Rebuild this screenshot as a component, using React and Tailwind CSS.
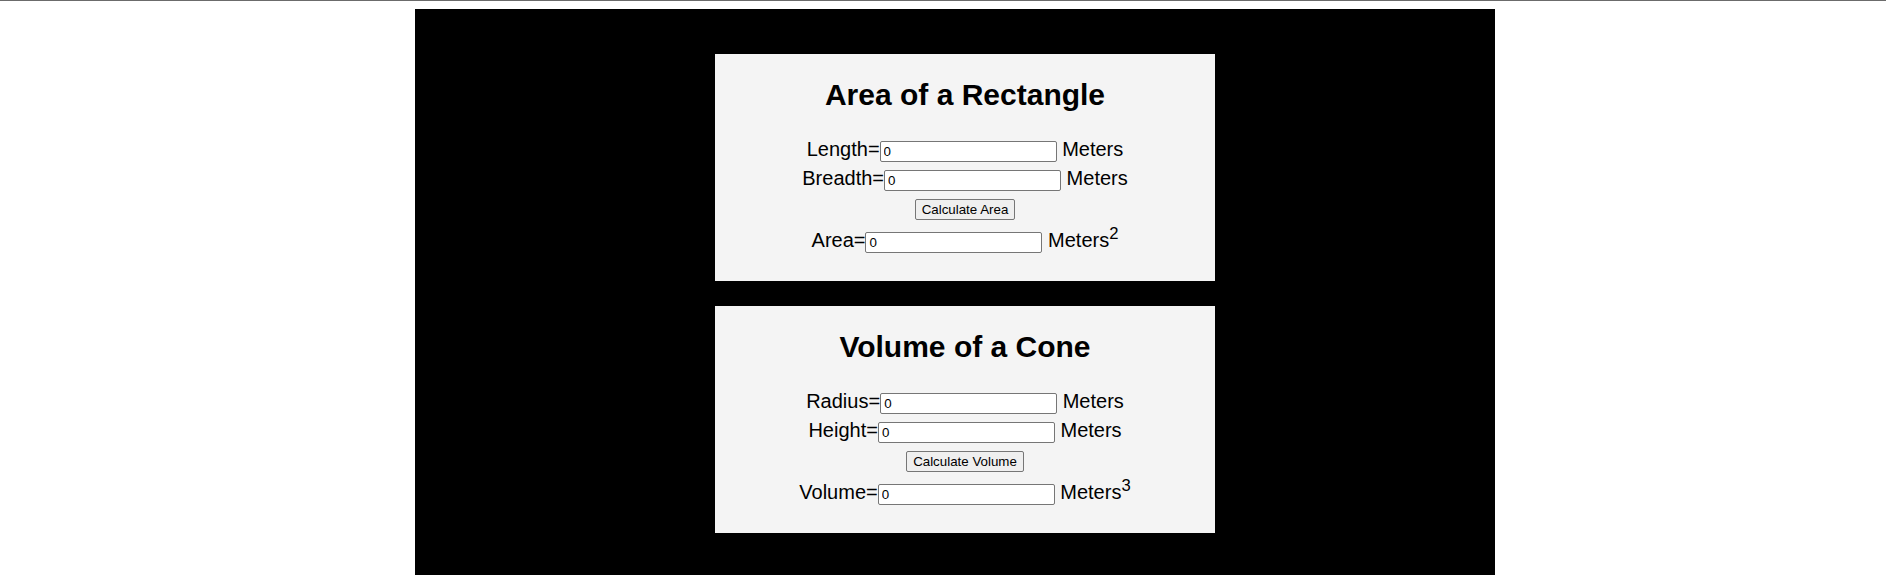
import React, { useState } from "react";

const inputCls =
  "inline-block align-baseline w-[177px] h-[21px] border border-[#767676] rounded-[2px] bg-white pl-[3px] pr-[2px] py-[1px] text-[13.333px] leading-normal text-black";
const btnCls =
  "inline-block align-baseline h-[21px] border border-[#767676] rounded-[2px] bg-[#efefef] px-[6px] text-[13.333px] leading-normal text-black";

function Row({ label, value, onChange, unit, className = "" }) {
  return (
    <div className={`leading-[29px] ${className}`}>
      {label}=
      <input type="text" className={inputCls} value={value} onChange={(e) => onChange(e.target.value)} />
      {" "}
      {unit}
    </div>
  );
}

function Card({ title, children }) {
  return (
    <div className="w-[500px] bg-[#f4f4f4] pt-6 pb-[26px] text-center text-[20px] text-black">
      <h2 className="text-[30px] font-bold leading-[34px] mb-[23px]">{title}</h2>
      {children}
    </div>
  );
}

export default function App() {
  const [length, setLength] = useState("0");
  const [breadth, setBreadth] = useState("0");
  const [area, setArea] = useState("0");
  const [radius, setRadius] = useState("0");
  const [height, setHeight] = useState("0");
  const [volume, setVolume] = useState("0");

  const calcArea = () => setArea(String(Number(length) * Number(breadth)));
  const calcVolume = () =>
    setVolume(String((Math.PI * Number(radius) * Number(radius) * Number(height)) / 3));

  return (
    <div className="min-h-[575px] bg-white border-t border-[#6b6b6b] font-['Liberation_Sans',Arial,sans-serif]">
      <div className="ml-[415px] mt-2 w-[1080px] min-h-[600px] bg-black pt-[45px] pl-[300px]">
        <div className="flex flex-col gap-[25px]">
          <Card title="Area of a Rectangle">
            <Row label="Length" value={length} onChange={setLength} unit="Meters" />
            <Row label="Breadth" value={breadth} onChange={setBreadth} unit="Meters" />
            <div className="leading-[29px]">
              <button type="button" className={btnCls} onClick={calcArea}>
                Calculate Area
              </button>
            </div>
            <Row
              label="Area"
              value={area}
              onChange={setArea}
              className="mt-1"
              unit={
                <>
                  Meters<sup className="text-[16.667px] top-[-8px]">2</sup>
                </>
              }
            />
          </Card>
          <Card title="Volume of a Cone">
            <Row label="Radius" value={radius} onChange={setRadius} unit="Meters" />
            <Row label="Height" value={height} onChange={setHeight} unit="Meters" />
            <div className="leading-[29px]">
              <button type="button" className={btnCls} onClick={calcVolume}>
                Calculate Volume
              </button>
            </div>
            <Row
              label="Volume"
              value={volume}
              onChange={setVolume}
              className="mt-1"
              unit={
                <>
                  Meters<sup className="text-[16.667px] top-[-8px]">3</sup>
                </>
              }
            />
          </Card>
        </div>
      </div>
    </div>
  );
}
